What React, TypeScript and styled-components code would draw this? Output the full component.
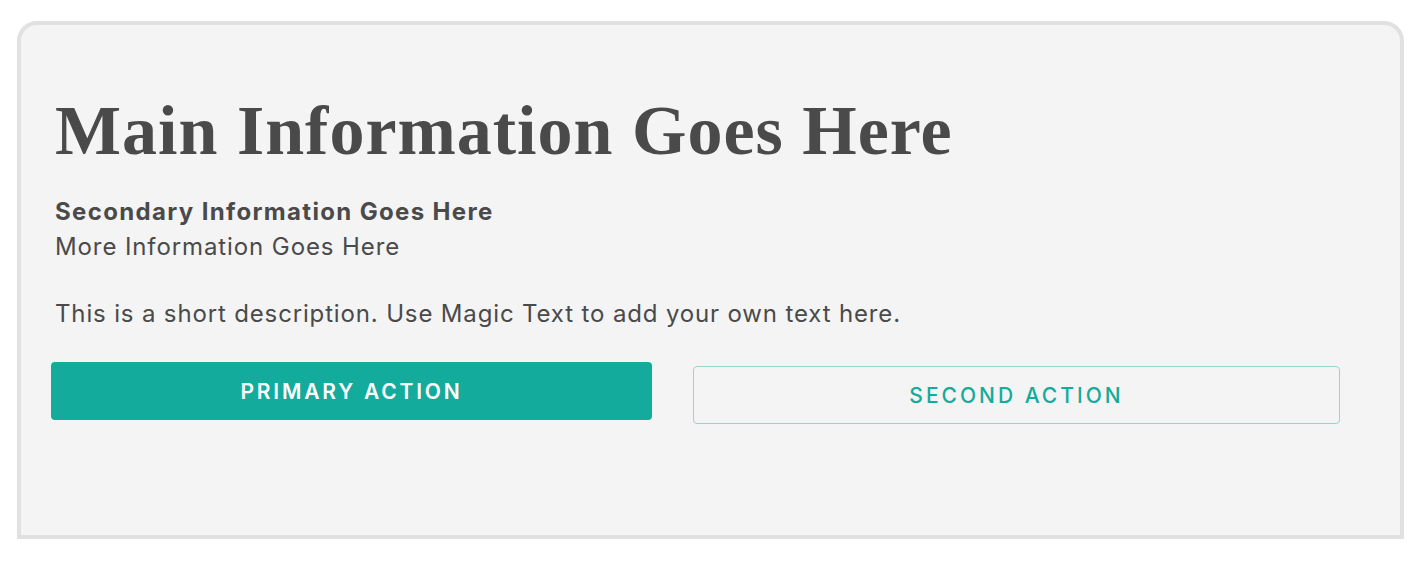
import React from "react";
import styled, { createGlobalStyle } from "styled-components";

const GlobalStyle = createGlobalStyle`
  body {
    margin: 0;
    background: #ffffff;
    font-family: "Inter", "Liberation Sans", sans-serif;
  }
`;

const Card = styled.section`
  box-sizing: border-box;
  width: 1387px;
  margin: 21px 0 0 17px;
  padding: 66px 30px 111px 30px;
  background: #f4f4f4;
  border: 4px solid #e1e1e1;
  border-radius: 20px 20px 0 0;
  color: #4a4a4a;
`;

const Copy = styled.div`
  padding-left: 4px;
`;

const Title = styled.h1`
  margin: 0 0 23px 0;
  font-family: "Liberation Serif", "DejaVu Serif", serif;
  font-weight: 700;
  font-size: 70px;
  line-height: 80px;
  letter-spacing: 1px;
  color: #4a4a4a;
`;

const Line = styled.div<{ $bold?: boolean }>`
  font-size: 24px;
  line-height: 35px;
  font-weight: ${({ $bold }) => ($bold ? 700 : 400)};
  letter-spacing: ${({ $bold }) => ($bold ? "1.35px" : "0.9px")};
`;

const Description = styled.p`
  margin: 32px 0 31px 0;
  font-size: 24px;
  line-height: 35px;
  letter-spacing: 0.85px;
`;

const Actions = styled.div`
  display: flex;
  align-items: flex-start;
  gap: 41px;
`;

const Button = styled.button<{ $variant: "primary" | "secondary" }>`
  box-sizing: border-box;
  height: 58px;
  border-radius: 4px;
  font-family: "Inter", "Liberation Sans", sans-serif;
  font-size: 21px;
  text-transform: uppercase;
  cursor: pointer;
  ${({ $variant }) =>
    $variant === "primary"
      ? `
    width: 601px;
    background: #13ab9b;
    border: none;
    color: #ffffff;
    font-weight: 600;
    letter-spacing: 2.8px;
  `
      : `
    width: 647px;
    margin-top: 4px;
    background: transparent;
    border: 1px solid #94d8cc;
    color: #13ab9b;
    font-weight: 500;
    letter-spacing: 3px;
  `}
`;

export default function App() {
  return (
    <>
      <GlobalStyle />
      <Card>
        <Copy>
          <Title>Main Information Goes Here</Title>
          <Line $bold>Secondary Information Goes Here</Line>
          <Line>More Information Goes Here</Line>
          <Description>
            This is a short description. Use Magic Text to add your own text here.
          </Description>
        </Copy>
        <Actions>
          <Button $variant="primary">Primary Action</Button>
          <Button $variant="secondary">Second Action</Button>
        </Actions>
      </Card>
    </>
  );
}
